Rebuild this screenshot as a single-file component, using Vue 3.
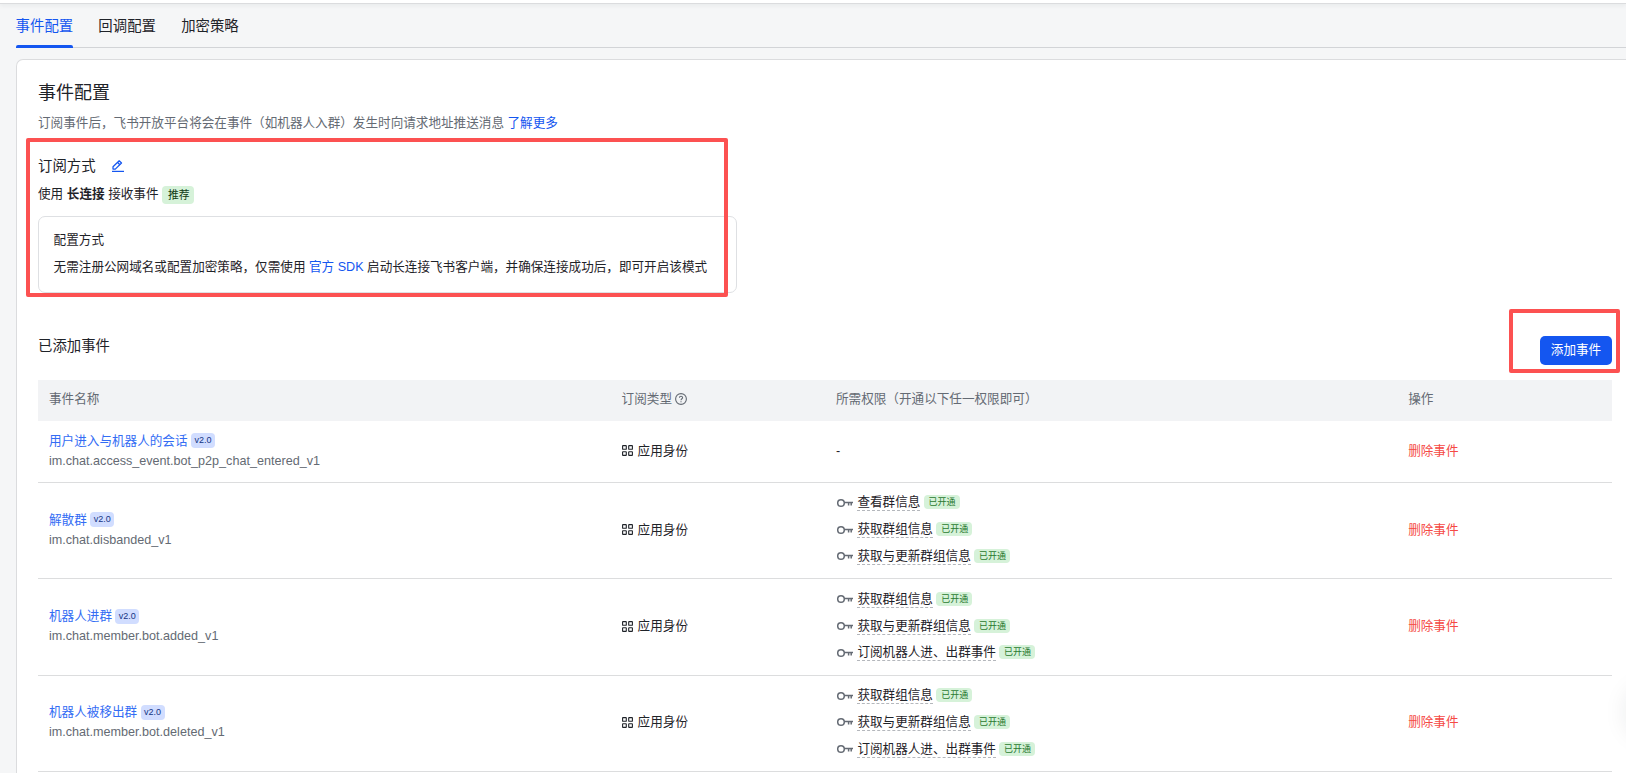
<script setup>
import { ref } from 'vue';

const tabs = ['事件配置', '回调配置', '加密策略'];
const activeTab = ref(0);

const events = ref([
  {
    name: '用户进入与机器人的会话',
    key: 'im.chat.access_event.bot_p2p_chat_entered_v1',
    scopes: [],
  },
  {
    name: '解散群',
    key: 'im.chat.disbanded_v1',
    scopes: ['查看群信息', '获取群组信息', '获取与更新群组信息'],
  },
  {
    name: '机器人进群',
    key: 'im.chat.member.bot.added_v1',
    scopes: ['获取群组信息', '获取与更新群组信息', '订阅机器人进、出群事件'],
  },
  {
    name: '机器人被移出群',
    key: 'im.chat.member.bot.deleted_v1',
    scopes: ['获取群组信息', '获取与更新群组信息', '订阅机器人进、出群事件'],
  },
]);

const removeEvent = (key) => {
  events.value = events.value.filter(event => event.key !== key);
};
</script>

<template>
  <div class="page">
    <div class="topbar"></div>

    <nav class="tabs">
      <a
        v-for="(tab, index) in tabs"
        :key="tab"
        class="tab"
        :class="{ active: index === activeTab }"
        @click="activeTab = index"
      >{{ tab }}</a>
    </nav>

    <main class="card">
      <h1 class="title">事件配置</h1>
      <p class="desc">订阅事件后，飞书开放平台将会在事件（如机器人入群）发生时向请求地址推送消息 <a class="link">了解更多</a></p>

      <div class="mode-head">
        <h2>订阅方式</h2>
        <svg class="edit-icon" viewBox="0 0 12 12" fill="none" stroke="currentColor" stroke-width="1.25" stroke-linejoin="round">
          <path d="M1 9.1V6.8L7.2 .8 9.5 3 3.3 9.1Z" />
          <path d="M5.6 2.5 7.9 4.7" />
          <path d="M0 11.4h12" />
        </svg>
      </div>
      <p class="mode">使用 <b>长连接</b> 接收事件 <span class="recommend">推荐</span></p>

      <div class="method">
        <p>配置方式</p>
        <p>无需注册公网域名或配置加密策略，仅需使用 <a class="link">官方 SDK</a> 启动长连接飞书客户端，并确保连接成功后，即可开启该模式</p>
      </div>

      <div class="section-head">
        <h2>已添加事件</h2>
        <button class="add-btn">添加事件</button>
      </div>

      <div class="table">
        <div class="row head">
          <div class="cell">事件名称</div>
          <div class="cell">
            订阅类型
            <svg class="help-icon" viewBox="0 0 12 12" fill="none" stroke="currentColor" stroke-width="1.1">
              <circle cx="6" cy="6" r="5.4" />
              <path d="M4.4 4.8C4.4 2.7 7.6 2.7 7.6 4.7 7.6 5.8 6 5.8 6 7.3M6 8.2v1" />
            </svg>
          </div>
          <div class="cell">所需权限（开通以下任一权限即可）</div>
          <div class="cell">操作</div>
        </div>

        <div v-for="event in events" :key="event.key" class="row" :class="{ tall: event.scopes.length }">
          <div class="cell">
            <div class="names">
              <div class="name"><a>{{ event.name }}</a><span class="version">v2.0</span></div>
              <div class="key">{{ event.key }}</div>
            </div>
          </div>
          <div class="cell">
            <svg class="app-icon" viewBox="0 0 11 11" fill="none" stroke="currentColor" stroke-width="1.1">
              <rect x=".6" y=".6" width="3.7" height="3.7" rx=".4" />
              <rect x="6.7" y=".6" width="3.7" height="3.7" rx=".4" />
              <rect x=".6" y="6.7" width="3.7" height="3.7" rx=".4" />
              <rect x="6.7" y="6.7" width="3.7" height="3.7" rx=".4" />
            </svg>
            应用身份
          </div>
          <div class="cell">
            <ul v-if="event.scopes.length" class="scopes">
              <li v-for="scope in event.scopes" :key="scope">
                <svg class="key-icon" viewBox="0 0 16 10" fill="none" stroke="currentColor" stroke-width="1.5">
                  <circle cx="4" cy="5" r="3.3" />
                  <path d="M7.3 4.6H16M11.6 4.6v3M14.2 4.6v2.8" />
                </svg>
                <span class="scope">{{ scope }}</span>
                <span class="granted">已开通</span>
              </li>
            </ul>
            <template v-else>-</template>
          </div>
          <div class="cell">
            <a class="danger" @click="removeEvent(event.key)">删除事件</a>
          </div>
        </div>
      </div>
    </main>

    <!-- red frames over the highlighted areas -->
    <div class="mark mark-mode"></div>
    <div class="mark mark-add"></div>
    <div class="float-btn"></div>
  </div>
</template>

<style>
body {
  margin: 0;
  overflow: hidden;
}
</style>

<style scoped>
.page {
  position: relative;
  width: 100%;
  height: 773px;
  overflow: hidden;
  background: #f5f6f7;
  color: #1f2329;
  font-family: "Liberation Sans", "Noto Sans CJK SC", sans-serif;
  font-size: 12.6px;
  line-height: 20px;
}

h1, h2, p, ul {
  margin: 0;
  padding: 0;
  font-weight: 400;
  list-style: none;
}

h2 {
  font-size: 14.4px;
  line-height: 22px;
}

a {
  cursor: pointer;
}

.link {
  color: #1456f0;
}

.topbar {
  height: 3px;
  background: #fff;
  border-bottom: 1px solid #dbdcde;
  box-shadow: 0 1px 5px rgba(31, 35, 41, 0.08);
}

.tabs {
  display: flex;
  gap: 25.2px;
  height: 43px;
  margin-left: 15.6px;
  border-bottom: 1px solid #d2d4d7;
}

.tab {
  height: 41px;
  font-size: 14.4px;
  line-height: 44px;
}

.tab.active {
  position: relative;
  color: #1456f0;
}

.tab.active::after {
  content: "";
  position: absolute;
  left: 0;
  bottom: -3px;
  width: 57px;
  height: 3px;
  border-radius: 2px 2px 0 0;
  background: #1456f0;
}

.card {
  height: 800px;
  margin: 11px 0 0 16px;
  padding: 20px 14px 0 21px;
  background: #fff;
  border: 1px solid #dbdcde;
  border-right: none;
  border-radius: 7px 0 0 0;
}

.title {
  font-size: 18px;
  line-height: 26px;
}

.desc {
  margin-top: 7px;
  color: #646a73;
}

.mode-head {
  display: flex;
  align-items: center;
  gap: 16px;
  margin-top: 22px;
}

.edit-icon {
  width: 12px;
  height: 12px;
  color: #1456f0;
}

.mode {
  display: flex;
  gap: 3.6px;
  margin-top: 7px;
}

.recommend {
  height: 18px;
  margin-top: 2px;
  padding: 0 4.8px 0 5.8px;
  border-radius: 4px;
  background: #d6f2d9;
  color: #0f3a13;
  font-size: 10.8px;
  line-height: 18px;
}

.method {
  box-sizing: border-box;
  width: 699px;
  height: 77px;
  margin-top: 12px;
  padding: 13px 0 0 14.6px;
  border: 1px solid #dee0e3;
  border-radius: 7px;
  white-space: nowrap;
}

.method p + p {
  margin-top: 7px;
}

.section-head {
  display: flex;
  justify-content: space-between;
  align-items: flex-start;
  height: 29px;
  margin-top: 43px;
}

.section-head h2 {
  line-height: 20px;
}

.add-btn {
  width: 72px;
  height: 29px;
  padding: 0 0 2px;
  border: none;
  border-radius: 5px;
  background: #1456f0;
  color: #fff;
  font: inherit;
}

.table {
  margin-top: 15px;
}

.row {
  display: grid;
  grid-template-columns: 572.6px 214.4px 572.2px 1fr;
  box-sizing: border-box;
  height: 62px;
  padding-bottom: 2px;
  border-bottom: 1px solid #dcddde;
}

.row.tall {
  height: 96.4px;
}

.row.head {
  height: 41px;
  padding-bottom: 3px;
  border-bottom: none;
  background: #f2f3f5;
  color: #646a73;
}

.cell {
  display: flex;
  align-items: center;
  padding-left: 11px;
}

.name {
  display: flex;
  align-items: center;
  gap: 3.4px;
  color: #336df4;
}

.version {
  height: 15px;
  padding: 0 3.5px;
  border-radius: 4px;
  background: #d1ddff;
  color: #133484;
  font-size: 9px;
  line-height: 15px;
}

.key {
  color: #646a73;
}

.help-icon {
  width: 12px;
  height: 12px;
  margin-left: 3.4px;
}

.app-icon {
  width: 11px;
  height: 11px;
  margin-right: 5px;
}

.scopes li {
  display: flex;
  align-items: center;
  height: 26.8px;
}

.key-icon {
  width: 16px;
  height: 10px;
  margin: 0 4.6px 0 .8px;
  color: #646a73;
}

.scope {
  height: 16px;
  line-height: 16px;
  border-bottom: 1px dashed #b4b7bc;
}

.granted {
  height: 14px;
  margin: -1px 0 0 3.4px;
  padding: 0 4.2px 0 4.8px;
  border-radius: 4px;
  background: #d6f2d9;
  color: #2a7a30;
  font-size: 9px;
  line-height: 14px;
}

.danger {
  color: #f54a45;
}

.mark {
  position: absolute;
  box-sizing: border-box;
  border: 4px solid #fc5151;
  border-radius: 2px;
}

.mark-mode {
  left: 26px;
  top: 138px;
  width: 702px;
  height: 159px;
}

.mark-add {
  left: 1509px;
  top: 309px;
  width: 111px;
  height: 64px;
}

.float-btn {
  position: absolute;
  left: 1630px;
  top: 690px;
  width: 44px;
  height: 44px;
  border-radius: 22px;
  box-shadow: 0 0 28px rgba(31, 35, 41, 0.14);
}
</style>
